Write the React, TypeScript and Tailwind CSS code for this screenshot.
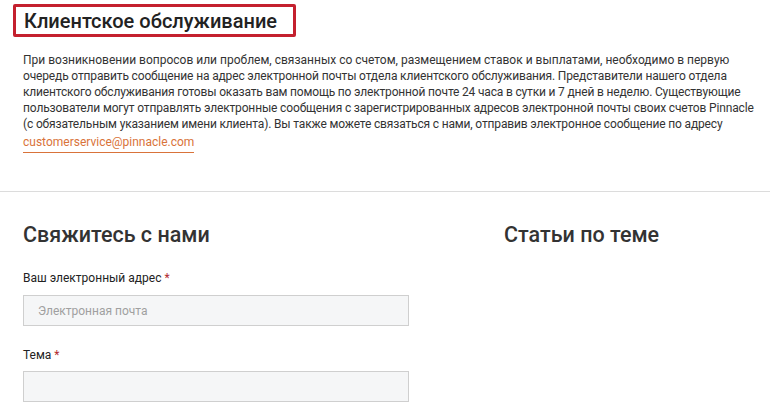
import React from "react";

export default function App() {
  return (
    <div className="w-[770px] h-[417px] overflow-hidden bg-white text-[#333]" style={{ fontFamily: "Roboto, 'Noto Sans', sans-serif" }}>
      <div className="px-[13px] pt-[4px]">
        <div className="border-[3px] border-[#c4202e] rounded-[2px] pl-[8px] h-[33px] flex items-center w-[283px]">
          <h1 className="text-[20px] leading-none font-medium whitespace-nowrap text-[#222]">Клиентское обслуживание</h1>
        </div>
      </div>
      <div className="pl-[23px] pt-[15px] pb-[38px] text-[12px] leading-[16px] text-[#333] whitespace-nowrap">
        <p>
          <span className="block">При возникновении вопросов или проблем, связанных со счетом, размещением ставок и выплатами, необходимо в первую</span>
          <span className="block tracking-[-0.15px]">очередь отправить сообщение на адрес электронной почты отдела клиентского обслуживания. Представители нашего отдела</span>
          <span className="block tracking-[-0.17px]">клиентского обслуживания готовы оказать вам помощь по электронной почте 24 часа в сутки и 7 дней в неделю. Существующие</span>
          <span className="block tracking-[-0.15px]">пользователи могут отправлять электронные сообщения с зарегистрированных адресов электронной почты своих счетов Pinnacle</span>
          <span className="block tracking-[-0.16px]">(с обязательным указанием имени клиента). Вы также можете связаться с нами, отправив электронное сообщение по адресу</span>
          <a className="inline-block mt-[3px] pb-[2px] leading-[15px] text-[#d9733a] border-b border-[#d9733a]">customerservice@pinnacle.com</a>
        </p>
      </div>
      <div className="border-t border-[#dcdcdc]" />
      <div className="flex px-[23px] pt-[29px]">
        <div className="w-[386px]">
          <h2 className="text-[21.5px] leading-[28px] font-medium text-[#333]">Свяжитесь с нами</h2>
          <div className="mt-[21px] text-[12px] leading-[16px] text-[#222]">
            Ваш электронный адрес <span className="text-[#b22a2f]">*</span>
          </div>
          <div className="mt-[9px] h-[31px] bg-[#f5f6f7] border border-[#cfcfcf] flex items-center px-[14px] text-[12px] text-[#a0a0a0]">
            Электронная почта
          </div>
          <div className="mt-[21px] text-[12px] leading-[16px] text-[#222]">
            Тема <span className="text-[#b22a2f]">*</span>
          </div>
          <div className="mt-[8px] h-[31px] bg-[#f5f6f7] border border-[#cfcfcf]" />
        </div>
        <div className="ml-[95px]">
          <h2 className="text-[21.5px] leading-[28px] font-medium text-[#333]">Статьи по теме</h2>
        </div>
      </div>
    </div>
  );
}
